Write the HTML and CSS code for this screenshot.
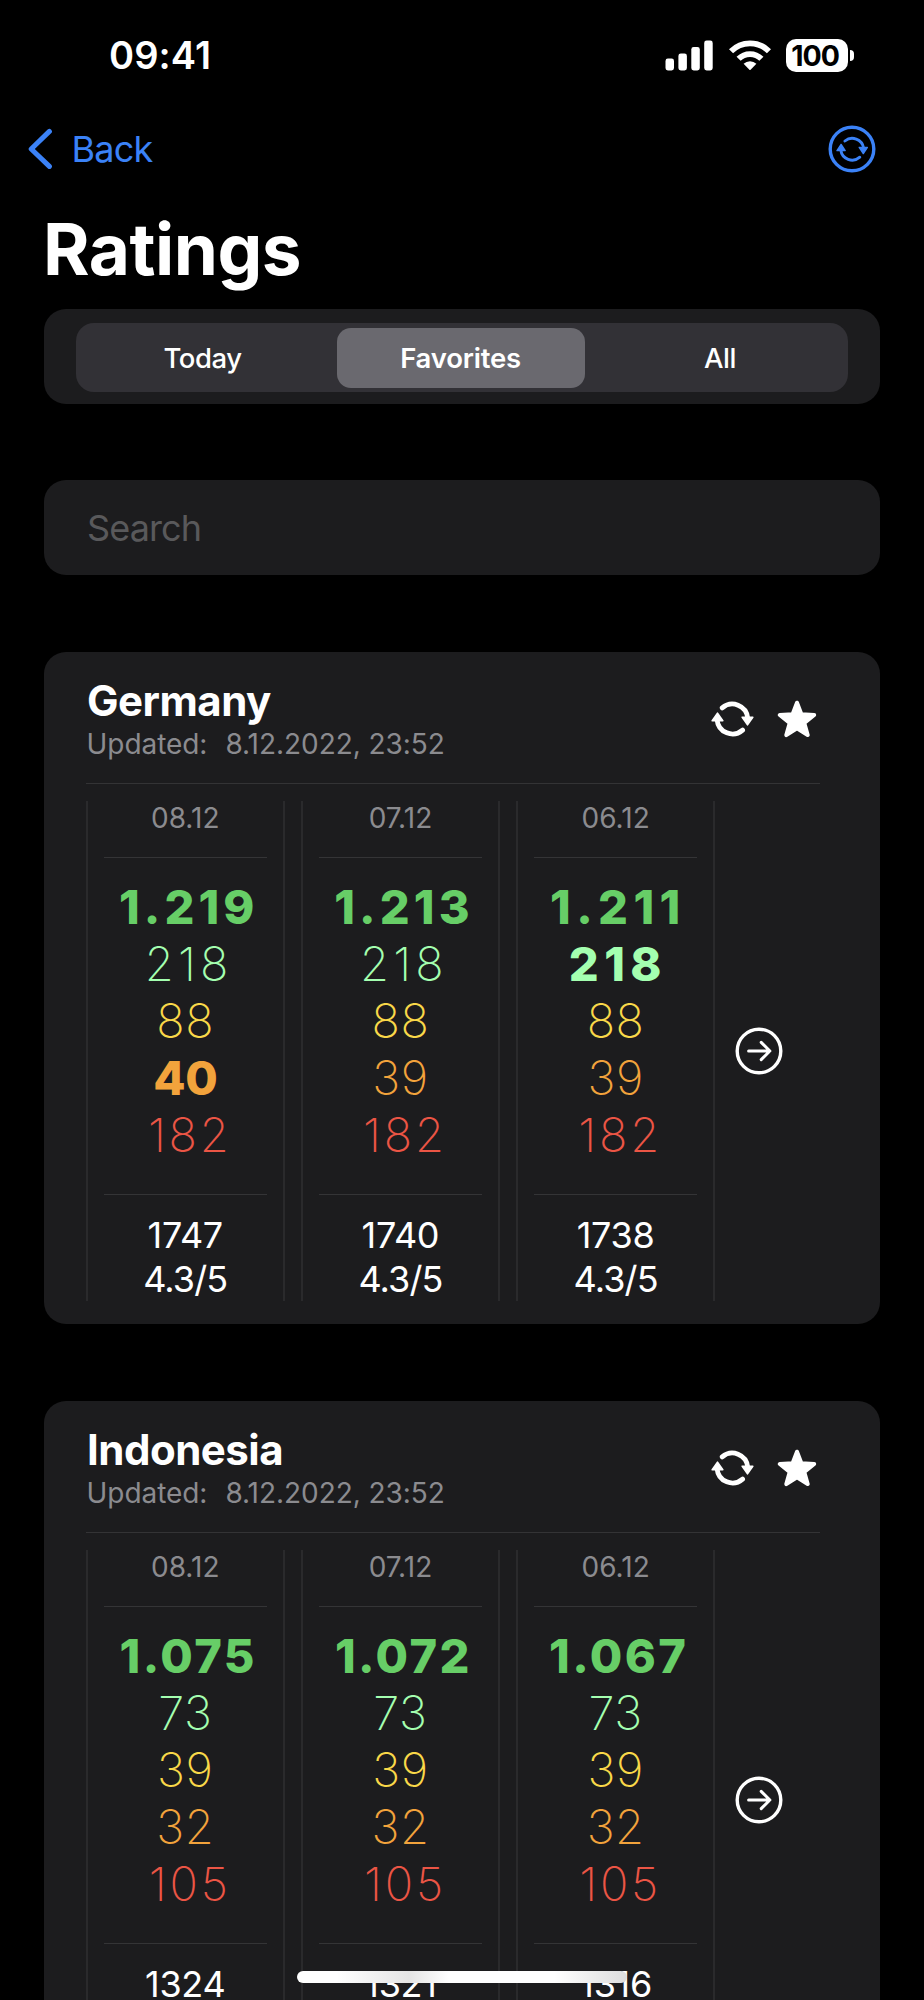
FILE: index.html
```html
<!DOCTYPE html>
<html lang="en">
<head>
  <meta charset="utf-8">
  <title>Ratings</title>
  <link rel="stylesheet" href="styles.css">
</head>
<body>
  <!-- Shared icons -->
  <svg class="sprite" aria-hidden="true">
    <symbol id="icon-refresh" viewBox="0 0 43 36">
      <path d="M11.2 6.9A15.4 15.4 0 0 1 36.7 17M31.6 29.1A15.4 15.4 0 0 1 6.1 19" fill="none" stroke="currentColor" stroke-width="4.8" stroke-linecap="round"/>
      <path d="M31.2 16.2h10.6l-5.3 7.6zM1.2 19.8h10.6l-5.3-7.6z" fill="currentColor" stroke="currentColor" stroke-width="1.6" stroke-linejoin="round"/>
    </symbol>
    <symbol id="icon-star" viewBox="0 0 40 40">
      <path d="M20 3.7 24.4 15.2 37.2 16 27.3 24 30.7 36.1 20 29.3 9.3 36.1 12.7 24 2.8 16 15.6 15.2z" fill="currentColor" stroke="currentColor" stroke-width="4" stroke-linejoin="round"/>
    </symbol>
    <symbol id="icon-arrow" viewBox="0 0 48 48">
      <circle cx="24" cy="24" r="21.8" fill="none" stroke="currentColor" stroke-width="3.4"/>
      <path d="M13.6 24h21M26.2 15.4l8.7 8.6-8.7 8.6" fill="none" stroke="currentColor" stroke-width="3" stroke-linecap="round" stroke-linejoin="round"/>
    </symbol>
  </svg>

  <div class="screen">
    <header class="status-bar">
      <span class="time">09:41</span>
      <div class="status-icons">
        <svg class="signal" viewBox="0 0 48 31" fill="currentColor">
          <rect x="0.5" y="18.5" width="8.5" height="12" rx="2.4"/>
          <rect x="13.4" y="13.5" width="8.5" height="17" rx="2.4"/>
          <rect x="26.3" y="7" width="8.5" height="23.5" rx="2.4"/>
          <rect x="39.2" y="0.5" width="8.5" height="30" rx="2.4"/>
        </svg>
        <svg class="wifi" viewBox="0 0 42 31">
          <path d="M2 11.3A26.6 26.6 0 0 1 40 11.3M9.6 18.8A16.1 16.1 0 0 1 32.4 18.8" fill="none" stroke="currentColor" stroke-width="5.8"/>
          <path d="M14.6 23.8A9.2 9.2 0 0 1 27.4 23.8L21.6 29.8Q21 30.3 20.4 29.8z" fill="currentColor"/>
        </svg>
        <div class="battery">
          <span class="battery-level">100</span>
          <span class="battery-tip"></span>
        </div>
      </div>
    </header>

    <nav class="nav-bar">
      <a class="back">
        <svg class="chevron" viewBox="0 0 25 42">
          <path d="M21.4 3.4 3.2 21 21.4 38.4" fill="none" stroke="currentColor" stroke-width="5" stroke-linecap="round" stroke-linejoin="round"/>
        </svg>
        <span>Back</span>
      </a>
      <svg class="refresh-all" viewBox="0 0 48 48">
        <circle cx="24" cy="24" r="21.8" fill="none" stroke="currentColor" stroke-width="3.4"/>
        <path d="M16.9 16A11.5 11.5 0 0 1 35.6 23M31.8 32.2A11.5 11.5 0 0 1 12.8 25" fill="none" stroke="currentColor" stroke-width="2.9" stroke-linecap="round"/>
        <path d="M31.2 22.4h8.2l-4.1 6.2zM9 25.6h8.2l-4.1-6.2z" fill="currentColor" stroke="currentColor" stroke-width="1.4" stroke-linejoin="round"/>
      </svg>
    </nav>

    <h1>Ratings</h1>

    <main class="content">
      <div class="panel filter">
        <div class="segmented">
          <button class="segment">Today</button>
          <button class="segment selected">Favorites</button>
          <button class="segment">All</button>
        </div>
      </div>

      <div class="panel">
        <input class="search" type="text" placeholder="Search">
      </div>

      <section class="panel card">
        <div class="card-header">
          <div>
            <h2>Germany</h2>
            <p class="updated"><span>Updated:</span><span>8.12.2022, 23:52</span></p>
          </div>
          <div class="actions">
            <svg class="icon-refresh"><use href="#icon-refresh"/></svg>
            <svg class="icon-star"><use href="#icon-star"/></svg>
          </div>
        </div>
        <div class="days">
          <div class="day">
            <div class="date">08.12</div>
            <div class="stars">
              <span class="five changed loose">1.219</span>
              <span class="four">218</span>
              <span class="three">88</span>
              <span class="two changed">40</span>
              <span class="one">182</span>
            </div>
            <div class="total"><span>1747</span><span class="average">4.3/5</span></div>
          </div>
          <div class="day">
            <div class="date">07.12</div>
            <div class="stars">
              <span class="five changed loose">1.213</span>
              <span class="four">218</span>
              <span class="three">88</span>
              <span class="two">39</span>
              <span class="one">182</span>
            </div>
            <div class="total"><span>1740</span><span class="average">4.3/5</span></div>
          </div>
          <div class="day">
            <div class="date">06.12</div>
            <div class="stars">
              <span class="five changed looser">1.211</span>
              <span class="four changed looser">218</span>
              <span class="three">88</span>
              <span class="two">39</span>
              <span class="one">182</span>
            </div>
            <div class="total"><span>1738</span><span class="average">4.3/5</span></div>
          </div>
          <svg class="icon-arrow"><use href="#icon-arrow"/></svg>
        </div>
      </section>

      <section class="panel card">
        <div class="card-header">
          <div>
            <h2>Indonesia</h2>
            <p class="updated"><span>Updated:</span><span>8.12.2022, 23:52</span></p>
          </div>
          <div class="actions">
            <svg class="icon-refresh"><use href="#icon-refresh"/></svg>
            <svg class="icon-star"><use href="#icon-star"/></svg>
          </div>
        </div>
        <div class="days">
          <div class="day">
            <div class="date">08.12</div>
            <div class="stars">
              <span class="five changed">1.075</span>
              <span class="four tight">73</span>
              <span class="three">39</span>
              <span class="two">32</span>
              <span class="one">105</span>
            </div>
            <div class="total"><span>1324</span></div>
          </div>
          <div class="day">
            <div class="date">07.12</div>
            <div class="stars">
              <span class="five changed">1.072</span>
              <span class="four tight">73</span>
              <span class="three">39</span>
              <span class="two">32</span>
              <span class="one">105</span>
            </div>
            <div class="total"><span>1321</span></div>
          </div>
          <div class="day">
            <div class="date">06.12</div>
            <div class="stars">
              <span class="five changed">1.067</span>
              <span class="four tight">73</span>
              <span class="three">39</span>
              <span class="two">32</span>
              <span class="one">105</span>
            </div>
            <div class="total"><span>1316</span></div>
          </div>
          <svg class="icon-arrow"><use href="#icon-arrow"/></svg>
        </div>
      </section>
    </main>

    <div class="home-indicator"></div>
  </div>
</body>
</html>
```
FILE: styles.css
```css
* {
  box-sizing: border-box;
}

body {
  margin: 0;
  background: #000;
  color: #fff;
  font-family: Inter, "Liberation Sans", sans-serif;
}

h1, h2, p {
  margin: 0;
}

svg {
  display: block;
  flex-shrink: 0;
}

.sprite {
  position: absolute;
  width: 0;
  height: 0;
}

.screen {
  position: relative;
  width: 924px;
  height: 2000px;
  overflow: hidden;
}

/* Status bar */
.status-bar {
  display: flex;
  align-items: center;
  justify-content: space-between;
  height: 111px;
  padding: 0 70px 0 109px;
}

.time {
  padding-bottom: 1px;
  font-size: 38px;
  font-weight: 600;
  letter-spacing: 0.1px;
}

.status-icons {
  display: flex;
  align-items: center;
}

.signal {
  width: 48px;
  height: 31px;
  margin-right: 16px;
}

.wifi {
  width: 42px;
  height: 31px;
  margin-right: 15px;
}

.battery {
  display: flex;
  align-items: center;
  gap: 2px;
}

.battery-level {
  width: 62px;
  height: 33px;
  padding-right: 4px;
  border-radius: 10px;
  background: #fff;
  color: #000;
  font-size: 28.5px;
  font-weight: 700;
  line-height: 33px;
  text-align: center;
  letter-spacing: -1px;
}

.battery-tip {
  width: 4px;
  height: 11px;
  border-radius: 0 5px 5px 0;
  background: #fff;
}

/* Navigation */
.nav-bar {
  display: flex;
  align-items: center;
  justify-content: space-between;
  height: 76px;
  padding: 0 48px 0 28px;
  color: #3b82f7;
}

.back {
  display: flex;
  align-items: center;
  gap: 18.5px;
  font-size: 36px;
  letter-spacing: -0.8px;
}

.chevron {
  width: 25px;
  height: 42px;
}

.refresh-all {
  width: 48px;
  height: 48px;
}

h1 {
  padding: 2px 0 0 43px;
  font-size: 71px;
  font-weight: 700;
  line-height: 120px;
  letter-spacing: -0.5px;
}

/* Panels */
.content {
  display: flex;
  flex-direction: column;
  gap: 76px;
  padding: 0 44px;
}

.panel {
  border-radius: 22px;
  background: #1c1c1e;
}

.filter {
  padding: 14px 32px 12px;
}

.segmented {
  display: grid;
  grid-template-columns: 245px 248px 248px;
  justify-content: space-between;
  height: 69px;
  padding: 5px 4px 4px;
  border-radius: 18px;
  background: #323136;
}

.segment {
  padding: 0;
  border: none;
  border-radius: 14px;
  background: none;
  color: #fff;
  font-family: inherit;
  font-size: 27.5px;
  font-weight: 500;
  letter-spacing: -0.5px;
}

.segment.selected {
  background: #6a696f;
  font-weight: 600;
  letter-spacing: -0.2px;
}

.search {
  display: block;
  width: 100%;
  height: 95px;
  padding: 0 43px;
  border: none;
  outline: none;
  background: none;
  color: #fff;
  font-family: inherit;
  font-size: 36px;
  letter-spacing: -0.9px;
}

.search::placeholder {
  color: #59595b;
}

/* Country card */
.card {
  height: 672px;
  margin-top: 1px;
  padding: 24px 60px 0 42px;
}

.card-header {
  display: flex;
  align-items: center;
  justify-content: space-between;
  height: 108px;
  padding-bottom: 20px;
  border-bottom: 1px solid #333335;
}

h2 {
  padding-left: 1px;
  font-size: 42px;
  font-weight: 700;
  line-height: 50px;
  letter-spacing: -0.5px;
}

.updated {
  display: flex;
  gap: 18px;
  padding-left: 0.5px;
  color: #8b8b8f;
  font-size: 28px;
  line-height: 37px;
  letter-spacing: -0.05px;
}

.actions {
  display: flex;
  align-items: center;
  gap: 23px;
  padding: 0 3px 2px 0;
}

.icon-refresh {
  width: 43px;
  height: 36px;
}

.icon-star {
  width: 40px;
  height: 40px;
}

.days {
  display: flex;
  align-items: center;
  gap: 16.7px;
  height: 500px;
  margin-top: 17px;
}

.day {
  width: 198.5px;
  height: 500px;
  padding: 0 16px;
  border: solid #2a2a2c;
  border-width: 0 2px;
  flex-shrink: 0;
  text-align: center;
}

.date {
  height: 57px;
  border-bottom: 1px solid #343436;
  color: #8b8b8f;
  font-size: 28px;
  line-height: 34px;
}

.stars {
  display: flex;
  flex-direction: column;
  height: 337px;
  padding-top: 19.5px;
  border-bottom: 1px solid #343436;
  font-size: 47px;
  font-weight: 200;
  line-height: 57px;
  letter-spacing: 0.5px;
  white-space: nowrap;
}

.five {
  padding-left: 6px;
  color: #67ce67;
  letter-spacing: 2.4px;
}

.four {
  padding-left: 7px;
  color: #a4ffb0;
  letter-spacing: 4.2px;
}

.three {
  color: #f9d849;
}

.two {
  color: #f2a33c;
}

.one {
  padding-left: 9px;
  color: #eb5545;
  letter-spacing: 2.8px;
}

.changed {
  font-weight: 800;
}

.two.changed {
  letter-spacing: -0.5px;
}

.tight {
  padding-left: 0;
  letter-spacing: 0.5px;
}

.loose {
  padding-left: 7px;
  letter-spacing: 4.1px;
}

.looser {
  padding-left: 4.5px;
  letter-spacing: 5.4px;
}

.total {
  display: flex;
  flex-direction: column;
  padding-top: 18px;
  font-size: 36px;
  line-height: 44px;
  letter-spacing: -0.3px;
}

.average {
  letter-spacing: -0.9px;
}

.icon-arrow {
  width: 48px;
  height: 48px;
  margin-left: 3px;
}

.home-indicator {
  position: absolute;
  left: 297px;
  bottom: 17px;
  width: 330px;
  height: 12px;
  border-radius: 6px;
  background: linear-gradient(to right, #fff 0, #fff 12%, #e4e4e4 34%, #fff 46%, #fff 78%, #ddd 100%);
}
```
